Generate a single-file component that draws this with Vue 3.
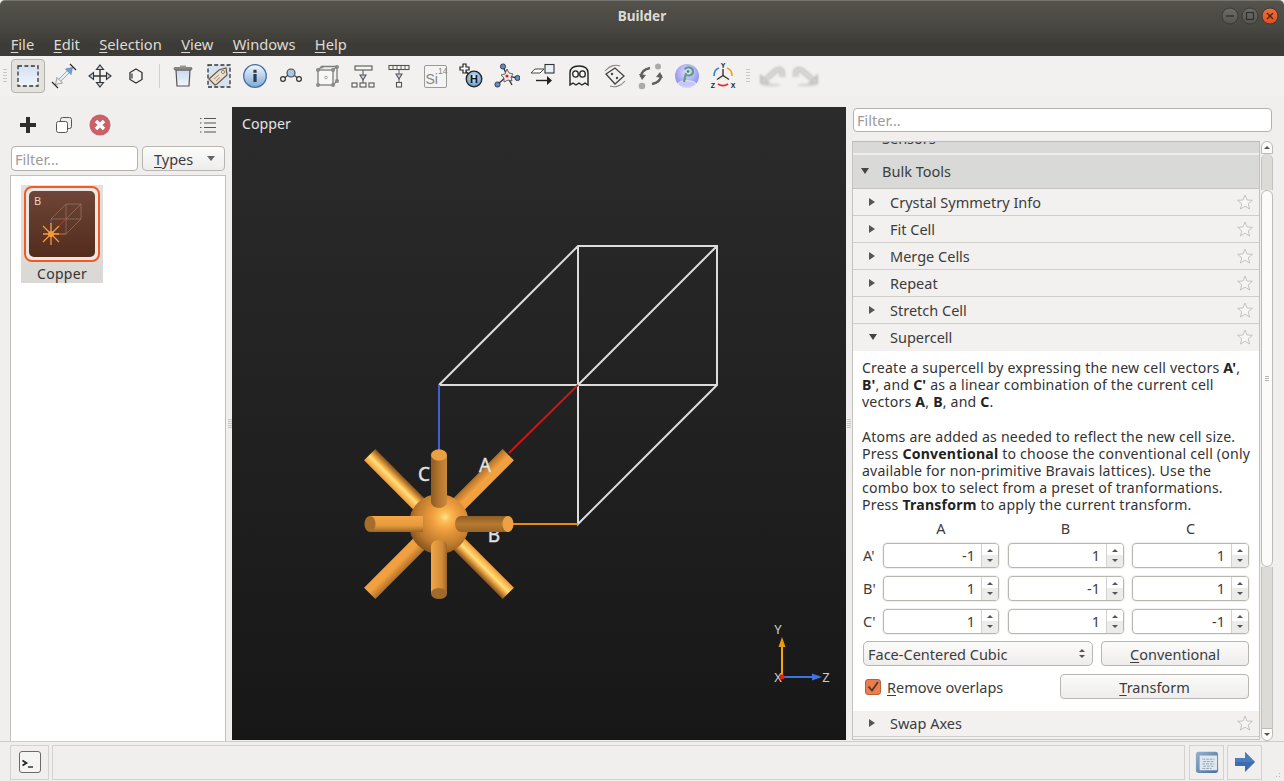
<script setup>
const menus = [['F','ile'],['E','dit'],['S','election'],['V','iew'],['W','indows'],['H','elp']]
const toolsTop = ['Crystal Symmetry Info','Fit Cell','Merge Cells','Repeat','Stretch Cell']
const spin = [['A\'',-1,1,1],['B\'',1,-1,1],['C\'',1,1,-1]]
</script>

<template>
  <div class="app">
    <header class="titlebar">
      <div class="titlerow">
        <span class="title">Builder</span>
        <div class="winbtns">
          <svg width="60" height="20" viewBox="0 0 60 20">
            <defs>
              <linearGradient id="wb" x1="0" y1="0" x2="0" y2="1"><stop offset="0" stop-color="#6d6c67"/><stop offset="1" stop-color="#55544f"/></linearGradient>
              <linearGradient id="wc" x1="0" y1="0" x2="0" y2="1"><stop offset="0" stop-color="#f0703f"/><stop offset="1" stop-color="#dc4f1f"/></linearGradient>
            </defs>
            <circle cx="10" cy="10" r="8" fill="url(#wb)" stroke="#3a3935"/>
            <path d="M6 10h8" stroke="#2f2e2a" stroke-width="1.3"/>
            <circle cx="30" cy="10" r="8" fill="url(#wb)" stroke="#3a3935"/>
            <rect x="26.5" y="6.5" width="7" height="7" fill="none" stroke="#2f2e2a" stroke-width="1.2"/>
            <circle cx="50" cy="10" r="8" fill="url(#wc)" stroke="#3a3935"/>
            <path d="M47 7l6 6M53 7l-6 6" stroke="#4a2410" stroke-width="1.3"/>
          </svg>
        </div>
      </div>
      <nav class="menubar">
        <span v-for="m in menus" :key="m[0]" class="menu"><u>{{ m[0] }}</u>{{ m[1] }}</span>
      </nav>
    </header>

    <div class="toolbar">
      <span class="grip"></span>
      <button class="tb active">
        <svg width="24" height="24" viewBox="0 0 24 24"><defs><linearGradient id="sel" x1="0" y1="0" x2="0" y2="1"><stop offset="0" stop-color="#d3e1f2"/><stop offset="1" stop-color="#f1f5fa"/></linearGradient></defs><rect x="2" y="2" width="20" height="20" fill="url(#sel)" stroke="#333" stroke-width="1.3" stroke-dasharray="4 2.4"/></svg>
      </button>
      <button class="tb">
        <svg width="26" height="26" viewBox="0 0 26 26"><path d="M7 17l10-10 2 2-10 10z" fill="#e6eef7" stroke="#7c8796" stroke-width=".7"/><path d="M21.500 4.500l-1.500 7-5.500-5.500z" fill="#6ea2d8" stroke="#4a78a8" stroke-width=".6"/><path d="M4.500 21.500l1.500-7 5.500 5.500z" fill="#f2f2f0" stroke="#777" stroke-width=".7"/><path d="M1 19l6 6M19 1l6 6" stroke="#222" stroke-width="1.100"/></svg>
      </button>
      <button class="tb">
        <svg width="24" height="24" viewBox="0 0 24 24"><path d="M12 4v16M4 12h16" stroke="#333" stroke-width="1.4"/><g fill="#c5d9ee" stroke="#333" stroke-width="1.1"><path d="M12 1l3.5 4.5h-7z"/><path d="M12 23l3.5-4.5h-7z"/><path d="M1 12l4.5-3.5v7z"/><path d="M23 12l-4.5-3.5v7z"/></g></svg>
      </button>
      <button class="tb">
        <svg width="20" height="20" viewBox="0 0 20 20"><path d="M10 3l6 3.5v7L10 17l-6-3.5v-7z" fill="#f4f4f2" stroke="#333" stroke-width="1.3"/><path d="M6 7.5v5" stroke="#333" stroke-width="1.2"/></svg>
      </button>
      <span class="sep"></span>
      <button class="tb">
        <svg width="24" height="24" viewBox="0 0 24 24"><defs><linearGradient id="tr" x1="0" y1="0" x2="0" y2="1"><stop offset="0" stop-color="#c8d9ee"/><stop offset="1" stop-color="#f3f6fa"/></linearGradient></defs><path d="M5 6h14l-1 16H6z" fill="url(#tr)" stroke="#555" stroke-width="1.2"/><rect x="3" y="3.5" width="18" height="2.5" rx="1" fill="#888" stroke="#555" stroke-width=".6"/><rect x="9" y="1.5" width="6" height="2" fill="#999"/></svg>
      </button>
      <button class="tb">
        <svg width="24" height="24" viewBox="0 0 24 24"><rect x="1" y="1" width="22" height="22" fill="#d4e2f2" stroke="#333" stroke-width="1.3" stroke-dasharray="4 2.2"/><path d="M2 15L12 6l7-2 1 7-10 9-2 1z" fill="#eadfce" stroke="#6f5a42" stroke-width="1.200"/><circle cx="16" cy="8" r="1.500" fill="#fff" stroke="#6f5a42" stroke-width=".8"/><path d="M7 15l5-4M9 17l4-3.500" stroke="#a59077"/></svg>
      </button>
      <button class="tb">
        <svg width="26" height="26" viewBox="0 0 26 26"><defs><linearGradient id="inf" x1="0" y1="0" x2="0" y2="1"><stop offset="0" stop-color="#f4f8fc"/><stop offset="1" stop-color="#7fa8d6"/></linearGradient></defs><circle cx="13" cy="13" r="11.3" fill="url(#inf)" stroke="#3f6ea6" stroke-width="1.3"/><rect x="11.4" y="11" width="3.2" height="8" fill="#2a3c55"/><rect x="11.4" y="6.8" width="3.2" height="3" fill="#2a3c55"/></svg>
      </button>
      <button class="tb">
        <svg width="24" height="24" viewBox="0 0 24 24"><path d="M4 15l8-6 8 6" fill="none" stroke="#444" stroke-width="1.2"/><circle cx="12" cy="9" r="4" fill="#a9c6e6" stroke="#444" stroke-width="1.1"/><circle cx="4" cy="15" r="2.4" fill="#f2f2f0" stroke="#333" stroke-width="1.2"/><circle cx="20" cy="15" r="2.4" fill="#f2f2f0" stroke="#333" stroke-width="1.2"/></svg>
      </button>
      <button class="tb">
        <svg width="24" height="24" viewBox="0 0 24 24"><g fill="none" stroke="#7e7e7c" stroke-width="1.300"><rect x="3" y="6" width="15" height="15" fill="#f7f7f5"/><path d="M3 6l4-3.500h15V17l-4 4M18 6l4-3.500"/></g><circle cx="11" cy="13.500" r="1.300" fill="none" stroke="#888" stroke-width=".7"/><g fill="#8a8a88"><circle cx="3" cy="6" r="2"/><circle cx="18" cy="6" r="2"/><circle cx="3" cy="21" r="2"/><circle cx="18" cy="21" r="2"/><circle cx="22" cy="3" r="2"/><circle cx="7" cy="3" r="1.600"/><circle cx="22" cy="17" r="2"/></g></svg>
      </button>
      <button class="tb">
        <svg width="24" height="24" viewBox="0 0 24 24"><g fill="#f5f5f3" stroke="#555" stroke-width="1.1"><rect x="4" y="2" width="17" height="4"/><rect x="1" y="19" width="5" height="4"/><rect x="9" y="19" width="6" height="4"/><rect x="18" y="19" width="5" height="4"/><path d="M9 11h6l-3 5z" fill="#c5d6ea"/></g><path d="M12 6v5M12 16v3" stroke="#555"/></svg>
      </button>
      <button class="tb">
        <svg width="24" height="24" viewBox="0 0 24 24"><g fill="#f5f5f3" stroke="#555" stroke-width="1.1"><rect x="2" y="1.5" width="20" height="4"/><rect x="9.5" y="18.5" width="5" height="4.5"/><path d="M9 10h6l-3 5z" fill="#c5d6ea"/></g><path d="M6 1.5v4M10 1.5v4M14 1.5v4M18 1.5v4M12 5.5V10M12 15v3.5" stroke="#555" stroke-width=".9"/></svg>
      </button>
      <button class="tb">
        <span class="si"><span class="si-s">Si</span><span class="si-n">14</span></span>
      </button>
      <button class="tb">
        <svg width="26" height="26" viewBox="0 0 26 26"><defs><radialGradient id="hb" cx=".5" cy=".4"><stop offset="0" stop-color="#e6f0fa"/><stop offset="1" stop-color="#6f9fd3"/></radialGradient></defs><path d="M7 8l8 7" stroke="#222" stroke-width="1.6"/><path d="M5 1h3v3h3v3H8v3H5V7H2V4h3z" fill="#fff" stroke="#222" stroke-width="1.2"/><circle cx="16" cy="16" r="7.8" fill="url(#hb)" stroke="#222" stroke-width="1.3"/><text x="16" y="20" class="hlabel">H</text></svg>
      </button>
      <button class="tb">
        <svg width="26" height="26" viewBox="0 0 26 26"><path d="M13 13L9 3M13 13l11 2M13 13L3 22M13 13L18 22" stroke="#333" stroke-width="1.3"/><path d="M13 6l2 4 4 1-2 3 1 4-4-1-4 2 0-4-3-3 4-1z" fill="#eee" stroke="#555" stroke-width=".9"/><circle cx="13" cy="13" r="1.6" fill="#d22"/><g fill="#5f8fc2" stroke="#223" stroke-width=".8"><circle cx="9" cy="3.5" r="2.6"/><circle cx="23.5" cy="15" r="2.6"/><circle cx="3.5" cy="21.5" r="2.6"/></g></svg>
      </button>
      <button class="tb">
        <svg width="26" height="26" viewBox="0 0 26 26"><rect x="15" y="1.5" width="9" height="8.5" fill="#eaf0f8" stroke="#333" stroke-width="1.1"/><path d="M1 10l4-4h9l-4 4z" fill="#fff" stroke="#333" stroke-width=".9"/><path d="M6 17.5h14" stroke="#222" stroke-width="1.4"/><path d="M17 13l5 4.5-5 4.5z" fill="#222"/></svg>
      </button>
      <button class="tb">
        <svg width="22" height="24" viewBox="0 0 22 24"><path d="M2 21V9c0-5 4-7 9-7s9 2 9 7v12l-3-2-3 2-3-2-3 2-3-2z" fill="#f2f2f0" stroke="#222" stroke-width="1.4"/><ellipse cx="7.5" cy="10" rx="2.8" ry="3.2" fill="#fff" stroke="#222" stroke-width="1.3"/><ellipse cx="14.5" cy="10" rx="2.8" ry="3.2" fill="#fff" stroke="#222" stroke-width="1.3"/></svg>
      </button>
      <button class="tb">
        <svg width="26" height="26" viewBox="0 0 26 26"><path d="M3 8C7 3 13 1 18 3M23 18c-4 5-10 7-15 5" fill="none" stroke="#888" stroke-width="1.1"/><path d="M4 11L13 5l9 8-9 8z" fill="#f0f0ee" stroke="#444" stroke-width="1.3"/><circle cx="10" cy="11" r="1.2" fill="#444"/><circle cx="15" cy="15" r="1.2" fill="#444"/></svg>
      </button>
      <button class="tb">
        <svg width="28" height="28" viewBox="0 0 28 28"><g fill="none" stroke="#5f5f5d" stroke-width="2.400"><path d="M4 15C4 10 8 7 13 6"/><path d="M24 13c0 5-4 8-9 9"/></g><path d="M2 12l3 6 4-5z" fill="#5f5f5d"/><path d="M26 16l-3-6-4 5z" fill="#5f5f5d"/><circle cx="21" cy="4.500" r="3" fill="#aaa"/><circle cx="5" cy="24" r="3.300" fill="#aaa"/></svg>
      </button>
      <button class="tb">
        <svg width="26" height="26" viewBox="0 0 26 26"><defs><radialGradient id="pb" cx=".5" cy=".35"><stop offset="0" stop-color="#e3e3fb"/><stop offset="1" stop-color="#9a9cf0"/></radialGradient></defs><circle cx="13" cy="13" r="12" fill="url(#pb)"/><ellipse cx="13" cy="21" rx="9" ry="3.4" fill="#c5c8f7" stroke="#fff" stroke-width=".6"/><path d="M10 19l2-9" stroke="#5d9d84" stroke-width="2.2"/><path d="M10.500 6.500C13 3 19 4 19 8.500S14 13 12.500 12" fill="none" stroke="#5d9d84" stroke-width="2"/><circle cx="14" cy="8.500" r="1.200" fill="#3b7a5f"/></svg>
      </button>
      <button class="tb">
        <svg width="26" height="26" viewBox="0 0 26 26"><path d="M13 12.5V6M13 12.5l-6 4M13 12.5l6 4" stroke="#333" stroke-width="1.4"/><path d="M9 5C6 6 4 9 4 13" fill="none" stroke="#3f7fd9" stroke-width="1.6"/><path d="M17 5c3 1 5 4 5 8" fill="none" stroke="#f0a020" stroke-width="1.6"/><path d="M8 21c3 2 7 2 10 0" fill="none" stroke="#e22" stroke-width="1.6"/><text x="13" y="5" class="axl">Y</text><text x="3" y="25" class="axl">Z</text><text x="23" y="25" class="axl">X</text></svg>
      </button>
      <span class="grip mid"></span>
      <button class="tb">
        <svg class="blur" width="28" height="24" viewBox="0 0 28 24"><ellipse cx="14" cy="21" rx="10" ry="1.500" fill="#d6d5d3"/><path d="M9 15L19 6.500C22 4.500 25 5.500 25.500 9L25 13" fill="none" stroke="#bdbdbb" stroke-width="5.500"/><path d="M9 15L19 6.500C22 4.500 25 5.500 25.500 9L25 13" fill="none" stroke="#dededc" stroke-width="2.500"/><path d="M3 9.500V20H13.500z" fill="#bdbdbb"/><path d="M5 14v4.500h4.500z" fill="#dadad8"/></svg>
      </button>
      <button class="tb">
        <svg class="blur" width="28" height="24" viewBox="0 0 28 24"><ellipse cx="14" cy="21" rx="10" ry="1.500" fill="#d6d5d3"/><path d="M19 15L9 6.500C6 4.500 3 5.500 2.500 9L3 13" fill="none" stroke="#bdbdbb" stroke-width="5.500"/><path d="M19 15L9 6.500C6 4.500 3 5.500 2.500 9L3 13" fill="none" stroke="#dededc" stroke-width="2.500"/><path d="M25 9.500V20H14.500z" fill="#bdbdbb"/><path d="M23 14v4.500h-4.500z" fill="#dadad8"/></svg>
      </button>
    </div>

    <main class="main">
      <aside class="left">
        <div class="left-tools">
          <svg class="lt-plus" width="18" height="18" viewBox="0 0 18 18"><path d="M9 1v16M1 9h16" stroke="#2e2e2c" stroke-width="4"/></svg>
          <svg class="lt-copy" width="18" height="18" viewBox="0 0 18 18"><rect x="5.5" y="1.5" width="11" height="11" rx="2" fill="#eee" stroke="#555" stroke-width="1"/><rect x="1.5" y="5.5" width="11" height="11" rx="2" fill="#fff" stroke="#555" stroke-width="1"/></svg>
          <svg class="lt-del" width="22" height="22" viewBox="0 0 22 22"><circle cx="11" cy="11" r="10.5" fill="#c9606a"/><path d="M7 7l8 8M15 7l-8 8" stroke="#fff" stroke-width="3.4"/></svg>
          <svg class="lt-list" width="18" height="18" viewBox="0 0 18 18"><g stroke="#555" stroke-width="1.2"><path d="M1 2.5h1.5M5 2.5h12M1 7h1.5M5 7h12M1 11.500h1.500M5 11.500h12M1 16h1.500M5 16h12"/></g></svg>
        </div>
        <div class="left-filter">
          <input class="field f1" placeholder="Filter..." />
          <div class="btn types"><span><u>T</u>ypes</span><i class="caret"></i></div>
        </div>
        <div class="list">
          <div class="thumb-item">
            <div class="thumb-ring">
              <div class="thumb">
                <span class="thumb-b">B</span>
                <svg width="66" height="66" viewBox="0 0 66 66">
                  <g fill="none" stroke="#a68a7e" stroke-width=".7" opacity=".75">
                    <path d="M22 28L37 13h15v15L37 43V28H22zM37 13v15M37 28h15M37 28l15-15"/>
                  </g>
                  <path d="M22 28v15" stroke="#6a6a9a" stroke-width=".7"/>
                  <path d="M22 43L37 28" stroke="#b0432b" stroke-width=".7"/>
                  <path d="M22 43h15" stroke="#d98a30" stroke-width=".8"/>
                  <g stroke="#f59a3d" stroke-width="1.3"><path d="M14 35l16 16M30 35L14 51M22 32v22M14 43h16"/></g>
                  <circle cx="22" cy="43" r="3" fill="#f59a3d"/>
                </svg>
              </div>
            </div>
            <div class="thumb-label">Copper</div>
          </div>
        </div>
      </aside>
      <div class="handle"><span></span></div>
      <section class="canvas">
        <svg class="scene" width="614" height="633" viewBox="232 107 614 633">
          <defs>
            <linearGradient id="bg" x1="0" y1="0" x2="0" y2="1"><stop offset="0" stop-color="#2b2b2b"/><stop offset="1" stop-color="#171717"/></linearGradient>
            <radialGradient id="sph" gradientUnits="userSpaceOnUse" cx="445" cy="517" r="38" fx="445" fy="517"><stop offset="0" stop-color="#ffe58f"/><stop offset=".13" stop-color="#fbbf58"/><stop offset=".32" stop-color="#f3a040"/><stop offset=".75" stop-color="#bd7a2c"/><stop offset="1" stop-color="#8a5820"/></radialGradient>
            <linearGradient id="cv" x1="0" y1="0" x2="1" y2="0"><stop offset="0" stop-color="#8c5a23"/><stop offset=".6" stop-color="#b87a30"/><stop offset="1" stop-color="#c98a3c"/></linearGradient>
            <linearGradient id="cvb" x1="0" y1="0" x2="1" y2="0"><stop offset="0" stop-color="#f3a545"/><stop offset=".7" stop-color="#d08a38"/><stop offset="1" stop-color="#9c6628"/></linearGradient>
            <linearGradient id="ch" x1="0" y1="0" x2="0" y2="1"><stop offset="0" stop-color="#f4a645"/><stop offset=".6" stop-color="#e59a3e"/><stop offset="1" stop-color="#9a6528"/></linearGradient>
            <linearGradient id="chr" x1="0" y1="0" x2="0" y2="1"><stop offset="0" stop-color="#8e5c24"/><stop offset=".5" stop-color="#b67a30"/><stop offset="1" stop-color="#9a6528"/></linearGradient>
            <linearGradient id="dA" gradientUnits="userSpaceOnUse" x1="-8" y1="0" x2="8" y2="0"><stop offset="0" stop-color="#ad7029"/><stop offset=".55" stop-color="#f4a03f"/><stop offset="1" stop-color="#f0a040"/></linearGradient>
            <linearGradient id="dB" gradientUnits="userSpaceOnUse" x1="-8" y1="0" x2="8" y2="0"><stop offset="0" stop-color="#f09a3a"/><stop offset=".45" stop-color="#ffe07a"/><stop offset=".6" stop-color="#f7b04a"/><stop offset="1" stop-color="#7d4f1e"/></linearGradient>
          </defs>
          <rect x="232" y="107" width="614" height="633" fill="url(#bg)"/>
          <g fill="none" stroke="#dcdcdc" stroke-width="2">
            <path d="M439 385L578 246H717V385L578 524V246M439 385H717M578 385L717 246"/>
          </g>
          <path d="M439 385V452" stroke="#3e62d0" stroke-width="2"/>
          <path d="M509 453L578 385" stroke="#cc1515" stroke-width="2"/>
          <path d="M510 524H578" stroke="#e88a0a" stroke-width="2"/>

          <text x="494" y="542" class="lab">B</text>

          <g transform="translate(439 524) rotate(45)"><rect x="-8" y="-98" width="16" height="90" fill="url(#dA)"/></g>
          <g transform="translate(439 524) rotate(225)"><rect x="-8" y="-98" width="16" height="90" fill="url(#dA)"/></g>
          <g transform="translate(439 524) rotate(-45)"><rect x="-8" y="-98" width="16" height="90" fill="url(#dB)"/></g>
          <g transform="translate(439 524) rotate(135)"><rect x="-8" y="-98" width="16" height="90" fill="url(#dB)"/></g>
          <circle cx="439" cy="524" r="30" fill="url(#sph)"/>

          <path d="M431 455H447V502a8 6 0 0 1-16 0z" fill="url(#cv)"/>
          <ellipse cx="439" cy="455" rx="8" ry="5.800" fill="#eca044"/>
          <path d="M431 546a8 6 0 0 1 16 0V593H431z" fill="url(#cvb)"/>
          <ellipse cx="439" cy="593.500" rx="8" ry="5.500" fill="#a06a2c"/>
          <path d="M370 516H423V532H370z" fill="url(#ch)"/>
          <ellipse cx="370" cy="524" rx="5.500" ry="8" fill="#a66c2a"/>
          <path d="M461 516H508V532H461a6 8 0 0 1 0-16z" fill="url(#chr)"/>
          <ellipse cx="508" cy="524" rx="5.500" ry="8" fill="#eda144"/>

          <text x="424" y="481" class="lab">C</text>
          <text x="485" y="472" class="lab">A</text>

          <path d="M782 677V645" stroke="#f5a800" stroke-width="2"/>
          <path d="M782 637l-3.500 10h7z" fill="#e89a10"/>
          <path d="M782 677H812" stroke="#3f74e0" stroke-width="2"/>
          <path d="M822 677l-10-3.500v7z" fill="#3f74e0"/>
          <text x="778" y="634" class="ax">Y</text>
          <text x="778" y="682" class="ax">X</text>
          <circle cx="782" cy="677" r="2.500" fill="#f01818"/>
          <text x="826" y="682" class="ax">Z</text>
        </svg>
        <span class="cap">Copper</span>
      </section>
      <div class="handle r"><span></span></div>
      <aside class="right">
        <input class="field f2" placeholder="Filter..." />
        <div class="tree-wrap">
          <div class="tree">
            <div class="clip"><span>Sensors</span></div>
            <div class="group">
              <i class="tri down"></i><span>Bulk Tools</span>
            </div>
            <div v-for="t in toolsTop" :key="t" class="row">
              <i class="tri"></i><span>{{ t }}</span>
              <svg class="star" width="16" height="16" viewBox="0 0 16 16"><path d="M8 1l2 5 5.400.300-4.200 3.400 1.400 5.300L8 12.100 3.400 15l1.400-5.300L.6 6.300 6 6z" fill="#f6f6f5" stroke="#bdbdbb" stroke-width=".9"/></svg>
            </div>
            <div class="row sup">
              <i class="tri down sm"></i><span>Supercell</span>
              <svg class="star" width="16" height="16" viewBox="0 0 16 16"><path d="M8 1l2 5 5.400.300-4.200 3.400 1.400 5.300L8 12.100 3.400 15l1.400-5.300L.6 6.300 6 6z" fill="#f6f6f5" stroke="#bdbdbb" stroke-width=".9"/></svg>
            </div>
            <div class="content">
              <p class="para">Create a supercell by expressing the new cell vectors <b>A'</b>,<br /><b>B'</b>, and <b>C'</b> as a linear combination of the current cell<br />vectors <b>A</b>, <b>B</b>, and <b>C</b>.<br /><br />Atoms are added as needed to reflect the new cell size.<br />Press <b>Conventional</b> to choose the conventional cell (only<br />available for non-primitive Bravais lattices). Use the<br />combo box to select from a preset of tranformations.<br />Press <b>Transform</b> to apply the current transform.</p>
              <div class="grid">
                <span></span><span class="hd">A</span><span class="hd">B</span><span class="hd c">C</span>
                <template v-for="r in spin" :key="r[0]">
                  <span class="rl">{{ r[0] }}</span>
                  <div v-for="i in 3" :key="i" class="spin" :class="{ last: i === 3 }">
                    <span class="val">{{ r[i] }}</span>
                    <span class="step"><i class="up"></i><i class="dn"></i></span>
                  </div>
                </template>
              </div>
              <div class="act">
                <div class="btn combo"><span>Face-Centered Cubic</span><span class="updn"><i class="up"></i><i class="dn"></i></span></div>
                <div class="btn conv"><span><u>C</u>onventional</span></div>
              </div>
              <div class="act a2">
                <svg class="chk" width="16" height="16" viewBox="0 0 16 16"><rect x=".5" y=".5" width="15" height="15" rx="2.500" fill="#ee7d4d" stroke="#b8623d"/><path d="M3.500 7.500l3.500 4 6-8.500" fill="none" stroke="#4a3a32" stroke-width="1.800"/></svg>
                <span class="chkl"><u>R</u>emove overlaps</span>
                <div class="btn trans"><span><u>T</u>ransform</span></div>
              </div>
            </div>
            <div class="row swap">
              <i class="tri"></i><span>Swap Axes</span>
              <svg class="star" width="16" height="16" viewBox="0 0 16 16"><path d="M8 1l2 5 5.400.300-4.200 3.400 1.400 5.300L8 12.100 3.400 15l1.400-5.300L.6 6.300 6 6z" fill="#f6f6f5" stroke="#bdbdbb" stroke-width=".9"/></svg>
            </div>
          </div>
          <div class="scroll">
            <div class="sb-btn top"><i class="up"></i></div>
            <div class="sb-tr1"></div>
            <div class="sb-thumb"><span></span></div>
            <div class="sb-tr2"></div>
            <div class="sb-btn bot"><i class="dn"></i></div>
          </div>
        </div>
      </aside>
    </main>

    <footer class="status">
      <div class="s-frame s1">
        <div class="term"><svg width="22" height="22" viewBox="0 0 22 22"><path d="M3.500 9.500l4 2.500-4 2.500" fill="none" stroke="#222" stroke-width="1.700"/><path d="M9 16h5" stroke="#333" stroke-width="1.500"/></svg></div>
      </div>
      <div class="s-frame s2"></div>
      <div class="s-frame s3">
        <svg width="24" height="24" viewBox="0 0 26 26"><defs><linearGradient id="lg" x1="0" y1="0" x2="1" y2="1"><stop offset="0" stop-color="#94b0cf"/><stop offset="1" stop-color="#4a6d97"/></linearGradient></defs><rect x="1" y="2" width="24" height="23" rx="3" fill="url(#lg)"/><rect x="5" y="6" width="19" height="16" fill="#dfe7f0"/><path d="M8 10h13M9 12.500h12M8 15h13M9 17.500h12M8 20h10" stroke="#93a2b3" stroke-width="1" stroke-dasharray="3 1"/></svg>
      </div>
      <div class="s-frame s4">
        <svg width="22" height="22" viewBox="0 0 22 22"><path d="M1 7h10V1l10 10-10 10v-6H1z" fill="#3c6cae"/><path d="M1 7h10V1l10 10H1z" fill="#4a7dc0"/></svg>
      </div>
      <div class="corner"></div>
    </footer>
  </div>
</template>

<style>
html, body { margin: 0; padding: 0; background: #f0efed; overflow: hidden; }
</style>

<style scoped>
.app { width: 1284px; height: 781px; display: flex; flex-direction: column; font-family: "Noto Sans", "Open Sans", sans-serif; font-size: 14px; color: #3c3c3c; background: #f0efed; overflow: hidden; }
u { text-underline-offset: 2px; text-decoration-thickness: 1px; }

.titlebar { height: 56px; flex: none; background: linear-gradient(#54524b 0, #4a4842 24px, #3c3b37 44px, #3c3b37 100%); border-top: 1px solid #77756f; border-radius: 5px 5px 0 0; box-sizing: border-box; }
.titlerow { height: 30px; position: relative; display: flex; align-items: center; justify-content: center; }
.title { font-weight: 700; font-size: 13.500px; color: #dfdbd2; }
.winbtns { position: absolute; right: 4px; top: 5px; }
.menubar { display: flex; padding-left: 1px; height: 25px; align-items: center; }
.menu { color: #dfdbd2; padding: 0 9.700px; font-size: 14.700px; }

.toolbar { height: 40px; flex: none; display: flex; align-items: center; padding-left: 10px; position: relative; background: #f2f1ef; }
.grip { width: 4px; height: 14px; margin-left: -7px; margin-right: 3px; background: repeating-linear-gradient(#c9c8c5 0 1px, transparent 1px 3px); }
.grip.mid { margin: 0 3px 0 5px; width: 4px; }
.tb { width: 36px; height: 36px; padding: 0; flex: none; border: 0; background: none; display: flex; align-items: center; justify-content: center; }
.tb.active { width: 34px; height: 34px; margin: 0 1px; border: 1px solid #b5b3ae; border-radius: 4px; background: #e3e2df; box-sizing: border-box; }
.sep { width: 1px; height: 24px; background: #cfcecb; margin: 0 5px 0 5px; flex: none; }
.blur { filter: blur(.8px); }
.si { width: 23px; height: 23px; border: 1px solid #9a9a98; border-radius: 2px; box-sizing: border-box; background: #f4f4f2; display: flex; justify-content: space-between; color: #868684; font-family: "Liberation Sans", sans-serif; line-height: 1; }
.si-n { font-size: 8.500px; align-self: flex-start; padding: 1px 1px 0 0; }
.si-s { font-size: 14px; align-self: flex-end; padding: 0 0 1px 1px; }
.hlabel { font: 700 11px "Liberation Sans", sans-serif; text-anchor: middle; fill: #111; }
.axl { font: 700 7px "Liberation Sans", sans-serif; text-anchor: middle; fill: #222; }

.main { height: 645px; flex: none; display: flex; }
.left { width: 228px; flex: none; display: flex; flex-direction: column; padding-top: 15px; box-sizing: border-box; }
.left-tools { height: 28px; display: flex; align-items: center; }
.lt-plus { margin-left: 19px; }
.lt-copy { margin-left: 18px; }
.lt-del { margin-left: 16px; }
.lt-list { margin-left: 88px; }
.left-filter { display: flex; gap: 4px; margin: 7px 3px 0 11px; height: 25px; }
.field { box-sizing: border-box; height: 25px; border: 1px solid #b4b2ad; border-radius: 4px; background: #fff; padding: 0 3px; font: inherit; font-size: 14.500px; outline: none; }
.field::placeholder { color: #9b9b9b; opacity: 1; }
.f1 { width: 127px; }
.btn { box-sizing: border-box; height: 25px; border: 1px solid #b8b6b1; border-radius: 4px; background: linear-gradient(#fbfbfa, #eeedeb); display: flex; align-items: center; justify-content: center; color: #3c3c3c; font-size: 14.500px; }
.types { width: 83px; justify-content: flex-start; padding-left: 11px; position: relative; }
.caret { width: 0; height: 0; border-left: 4px solid transparent; border-right: 4px solid transparent; border-top: 5px solid #666; margin-left: 14px; }
.list { flex: 1; margin: 4px 2px 0 10px; background: #fff; border: 1px solid #c2c0bb; border-bottom: 0; padding: 9px 0 0 10px; }
.thumb-item { width: 82px; height: 98px; background: linear-gradient(#e2e1df, #d9d8d5); display: flex; flex-direction: column; align-items: center; }
.thumb-ring { width: 76px; height: 76px; flex: none; margin-top: 1px; box-sizing: border-box; border: 2px solid #f25a1e; border-radius: 8px; display: flex; align-items: center; justify-content: center; background: #e9e8e6; }
.thumb { width: 66px; height: 66px; border-radius: 5px; background: linear-gradient(#6e4537, #532c1e); position: relative; }
.thumb svg { display: block; }
.thumb-b { position: absolute; left: 5px; top: 2px; font-size: 11px; color: #e8d0c4; }
.thumb-label { font-size: 14px; line-height: 21px; flex: none; padding-top: 1px; letter-spacing: .3px; color: #333; }

.handle { width: 4px; flex: none; position: relative; }
.handle span { position: absolute; left: 0; top: 323px; width: 4px; height: 10px; background: repeating-linear-gradient(#c6c5c2 0 1px, transparent 1px 2px); }
.handle.r { width: 6px; }
.handle.r span { left: 1px; }

.canvas { width: 614px; height: 633px; margin-top: 11px; flex: none; position: relative; background: #222; }
.scene { display: block; }
.cap { position: absolute; left: 10px; top: 7px; color: #e4e4e4; font-size: 14.200px; }
.lab { font: 400 19px "Noto Sans", sans-serif; fill: #e2e2e2; stroke: #e2e2e2; stroke-width: .4px; text-anchor: middle; }
.ax { font: 400 13px "Noto Sans", sans-serif; fill: #cfcfcf; text-anchor: middle; }

.right { width: 432px; flex: none; padding: 12px 12px 0 0; box-sizing: border-box; display: flex; flex-direction: column; }
.f2 { width: 419px; height: 24px; margin-left: 1px; }
.tree-wrap { display: flex; margin-top: 9px; height: 600px; }
.tree { width: 408px; flex: none; border-left: 1px solid #c4c2bd; border-right: 1px solid #c4c2bd; border-top: 1px solid #bdbbb6; border-bottom: 1px solid #c4c2bd; box-sizing: border-box; overflow: hidden; background: #f2f1ef; height: 599px; }
.clip { height: 11px; overflow: hidden; background: #d9d9d8; border-bottom: 2px solid #eeeeec; }
.clip span { display: block; margin: -14.500px 0 0 29px; line-height: 20px; font-size: 14.500px; }
.group { height: 34px; background: #d9d9d8; border-bottom: 1px solid #c4c2bd; box-sizing: border-box; display: flex; align-items: center; padding: 0 0 2px 8px; }
.group span { margin-left: 13px; font-size: 14.500px; }
.row { height: 27px; box-sizing: border-box; border-bottom: 1px solid #cfcdc9; display: flex; align-items: center; padding: 0 6px 0 16px; }
.row span { margin-left: 15px; flex: 1; font-size: 14.500px; }
.row.sup { border-bottom-color: transparent; padding-bottom: 1px; }
.swap { height: 26px; padding-bottom: 1px; }
.tri { flex: none; width: 0; height: 0; border-top: 4px solid transparent; border-bottom: 4px solid transparent; border-left: 6px solid #555; }
.tri.down { border-left: 4.500px solid transparent; border-right: 4.500px solid transparent; border-top: 6px solid #444; border-bottom: 0; }
.group .tri.down + span { margin-left: 13px; }
.row .tri.sm + span { margin-left: 13px; }
.content { height: 360px; box-sizing: border-box; background: #fff; padding: 8px 8px 0 9px; }
.para { margin: 0; font-size: 14.100px; letter-spacing: .2px; line-height: 17.140px; white-space: nowrap; color: #333; }
.para b { color: #222; }
.grid { display: grid; grid-template-columns: 20px 125px 124px 117px; grid-auto-rows: 33px; grid-template-rows: 21px; margin: 5px 0 0 1px; align-items: center; }
.grid > .hd { height: 18px; line-height: 18px; padding-top: 1px; text-align: center; padding-right: 9px; font-size: 14.500px; }
.grid > .hd.c { padding-right: 0; }
.grid > span:nth-child(-n+4) { align-self: start; }
.rl { font-size: 14.500px; padding-bottom: 2px; }
.spin { box-sizing: border-box; width: 116px; height: 25px; border: 1px solid #b8b6b1; border-radius: 4px; background: #fff; display: flex; justify-content: space-between; box-shadow: 0 0 0 1px #f1f1ef; }
.spin.last { width: 117px; }
.val { flex: 1; text-align: right; padding-right: 6px; line-height: 23px; font-size: 14.500px; }
.step { width: 16px; flex: none; border-left: 1px solid #d4d2ce; background: linear-gradient(#fff 50%, #ececea 50%); border-radius: 0 3px 3px 0; display: flex; flex-direction: column; align-items: center; justify-content: center; gap: 7px; }
.up { display: block; width: 0; height: 0; border-left: 3px solid transparent; border-right: 3px solid transparent; border-bottom: 3px solid #555; }
.dn { display: block; width: 0; height: 0; border-left: 3px solid transparent; border-right: 3px solid transparent; border-top: 3px solid #555; }
.act { display: flex; margin: 0 0 0 1px; height: 25px; gap: 8px; }
.grid + .act { margin-top: 3px; }
.combo { width: 230px; justify-content: space-between; padding: 0 7px 0 4px; border-radius: 5px; }
.updn { display: flex; flex-direction: column; gap: 3px; }
.conv { width: 148px; }
.a2 { margin-top: 8px; align-items: center; gap: 0; }
.chk { margin-left: 2px; flex: none; }
.chkl { margin-left: 6px; width: 173px; font-size: 14.500px; }
.trans { width: 189px; }

.scroll { width: 12px; margin-left: 1px; height: 600px; display: flex; flex-direction: column; flex: none; }
.sb-btn { height: 13px; flex: none; border: 1px solid #bdbbb6; box-sizing: border-box; background: #fbfbfa; display: flex; align-items: center; justify-content: center; }
.sb-btn.top { border-radius: 6px 6px 0 0; }
.sb-btn.bot { border-radius: 0 0 6px 6px; }
.sb-tr1 { height: 36px; flex: none; background: #dcdbd8; border-left: 1px solid #c4c2bd; border-right: 1px solid #c4c2bd; border-radius: 6px 6px 0 0; box-sizing: border-box; }
.sb-thumb { height: 377px; flex: none; background: #fbfbfa; border: 1px solid #bdbbb6; border-radius: 6px; box-sizing: border-box; display: flex; align-items: center; justify-content: center; }
.sb-thumb span { width: 4px; height: 5px; background: repeating-linear-gradient(#b6b5b2 0 1px, transparent 1px 2px); }
.sb-tr2 { flex: 1; background: #dcdbd8; border-left: 1px solid #c4c2bd; border-right: 1px solid #c4c2bd; box-sizing: border-box; }

.status { height: 40px; flex: none; display: flex; align-items: center; padding: 3px 0 2px 10px; box-sizing: border-box; gap: 3px; position: relative; border-top: 1px solid #cfcdc9; }
.s-frame { box-sizing: border-box; height: 35px; border: 1px solid #d3d2ce; display: flex; align-items: center; justify-content: center; }
.s1 { width: 39px; }
.s2 { width: 1133px; }
.s3 { width: 35px; margin-left: 1px; }
.s4 { width: 35px; }
.term { box-sizing: border-box; width: 22px; height: 22px; border: 1px solid #6a6a68; border-radius: 3px; background: #f5f5f3; }
.term svg { display: block; margin: -1px; }
.corner { width: 10px; height: 10px; position: absolute; right: 2px; bottom: 2px; background: radial-gradient(circle, #bbb 0 .8px, transparent 1px) 0 0 / 3px 3px; clip-path: polygon(100% 0, 100% 100%, 0 100%); }
</style>
